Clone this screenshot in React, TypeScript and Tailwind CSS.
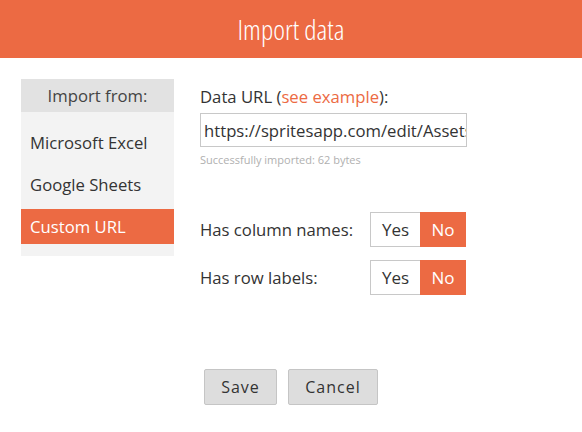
const ORANGE = 'bg-[#ec6a43]';

function Toggle({ value }: { value: boolean }) {
  return (
    <div className="mr-[1px] flex h-[35px] text-[17px]">
      <div
        className={`flex w-[50px] items-center justify-center border border-r-0 ${
          value ? 'border-[#ec6a43] bg-[#ec6a43] text-white' : 'border-[#c8c8c8] bg-white text-[#333]'
        }`}
      >
        Yes
      </div>
      <div
        className={`flex w-[46px] items-center justify-center border ${
          !value ? 'border-[#ec6a43] bg-[#ec6a43] text-white' : 'border-[#c8c8c8] bg-white text-[#333]'
        }`}
      >
        No
      </div>
    </div>
  );
}

export default function App() {
  return (
    <div className="flex h-[432px] w-[582px] flex-col bg-white font-['Open_Sans',sans-serif] text-[16.7px] text-[#333]">
      {/* Title bar */}
      <div className={`flex h-[58px] items-center justify-center ${ORANGE}`}>
        <h1 className="font-stretch-condensed text-[28px] font-light text-white">Import data</h1>
      </div>

      <div className="flex pl-[21px] pt-[21px]">
        {/* Source list */}
        <div className="w-[153px] self-start bg-[#f3f3f3]">
          <div className="flex h-[33px] items-center justify-center bg-[#e2e2e2] text-[#444]">
            Import from:
          </div>
          <div className="flex flex-col gap-[7px] pb-[12px] pt-[13px]">
            <div className="flex h-[35px] items-center pl-[9px]">Microsoft Excel</div>
            <div className="flex h-[35px] items-center pl-[9px]">Google Sheets</div>
            <div className={`flex h-[35px] items-center pl-[9px] text-white ${ORANGE}`}>Custom URL</div>
          </div>
        </div>

        {/* Settings */}
        <div className="ml-[26px] flex w-[267px] flex-col">
          <div className="mt-[7px] leading-[22px]">
            Data URL (<span className="text-[#ec6a43]">see example</span>):
          </div>
          <input
            readOnly
            value="https://spritesapp.com/edit/AssetsData"
            className="mt-[5px] h-[34px] w-[267px] border border-[#c8c8c8] pl-[3px] text-[#333] outline-none"
          />
          <div className="mt-[5px] text-[11px] leading-[15px] text-[#b0b0b0]">Successfully imported: 62 bytes</div>

          <div className="mt-[45px] flex items-center justify-between">
            <span>Has column names:</span>
            <Toggle value={false} />
          </div>
          <div className="mt-[13px] flex items-center justify-between">
            <span>Has row labels:</span>
            <Toggle value={false} />
          </div>
        </div>
      </div>

      {/* Footer */}
      <div className="mt-auto flex justify-center gap-[11px] pb-[27px]">
        <button className="h-[36px] w-[73px] rounded-[2px] border border-[#c5c5c5] bg-[#dddddd] text-[16px] tracking-[1px] text-[#333]">
          Save
        </button>
        <button className="h-[36px] w-[90px] rounded-[2px] border border-[#c5c5c5] bg-[#dddddd] text-[16px] tracking-[1px] text-[#333]">
          Cancel
        </button>
      </div>
    </div>
  );
}
